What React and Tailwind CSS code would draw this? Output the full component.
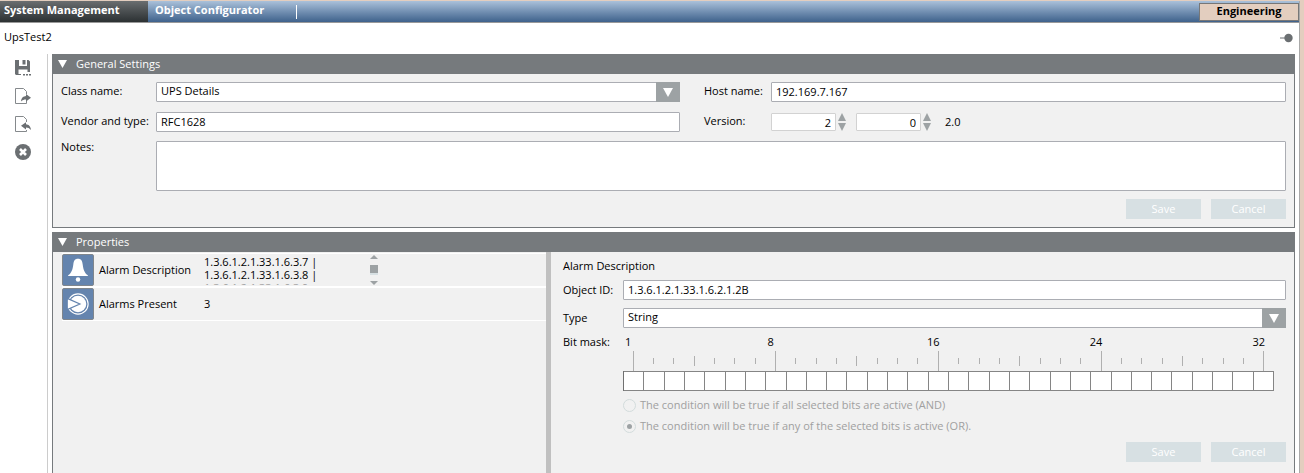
import React, { useState } from "react";

const TICKS = Array.from({ length: 32 }, (_, i) => i + 1);
const LABELLED = [1, 8, 16, 24, 32];

const fieldClass =
  "h-5 w-full min-w-0 rounded-[1px] border border-[#abadb3] bg-white pb-0.5 pl-1 text-[11px] leading-4 text-black outline-none";

const TriangleDown = ({ className }) => (
  <svg viewBox="0 0 10 9" preserveAspectRatio="none" className={className} fill="currentColor">
    <path d="M0 0h10L5 9z" />
  </svg>
);

const SaveIcon = () => (
  <svg viewBox="0 0 16 16" className="size-4">
    <path
      fill="#6b6f72"
      fillRule="evenodd"
      d="M0 0h4v6h8V0h1.500L15 1.500V12h-2.500V9.500h-9V15H1L0 14zM7.500 0h3v4.500h-3z"
    />
    <path fill="#6b6f72" d="M3 14h3v1H3zM8 14h2v1.500H8zM11 14h2v1.500h-2zM14 14h2v1.500h-2z" />
  </svg>
);

const ExportIcon = () => (
  <svg viewBox="0 0 16 16" className="size-4">
    <path fill="none" stroke="#85898c" d="M11.500 6V3.500L8.500.5h-8v15h11V13" />
    <path fill="#6b6f72" d="M6 13.500c.4-4 2.500-5.300 5-5.500V6L16 9.800l-5 3.700v-2c-2 0-3.500.5-5 2z" />
  </svg>
);

const ImportIcon = () => (
  <svg viewBox="0 0 16 16" className="size-4">
    <path fill="none" stroke="#85898c" d="M11.500 6V3.500L8.500.5h-8v15h11V14" />
    <path fill="#6b6f72" d="M16 14c-.4-4-2.500-5.500-5-5.700v-2L6 9.800l5 3.700v-2c2 0 3.500.8 5 2.500z" />
  </svg>
);

const DeleteIcon = () => (
  <svg viewBox="0 0 16 16" className="size-4">
    <circle cx="8" cy="8" r="8" fill="#6b6f72" />
    <path d="M5 5l6 6M11 5l-6 6" stroke="#fff" strokeWidth="2.600" />
  </svg>
);

const BellIcon = () => (
  <svg viewBox="0 0 32 32" className="size-full">
    <path fill="#fff" d="M16 4c3.500 0 4.500 2.300 5 6 .8 6 2 9 5.500 11.500v1h-21v-1C9 19 10.200 16 11 10c.5-3.700 1.500-6 5-6z" />
    <circle cx="16" cy="26" r="2.400" fill="#fff" />
  </svg>
);

const PresentIcon = () => (
  <svg viewBox="0 0 32 32" className="size-full">
    <circle cx="16" cy="16" r="10.800" fill="none" stroke="#fff" strokeWidth="1.200" />
    <circle cx="16" cy="16" r="8.800" fill="#fff" />
    <path fill="#fff" stroke="#6484ae" strokeWidth="1.300" d="M4.500 10L18 16 4.500 22z" />
  </svg>
);

const TOOLS = [
  { label: "Save", icon: SaveIcon },
  { label: "Export", icon: ExportIcon },
  { label: "Import", icon: ImportIcon },
  { label: "Delete", icon: DeleteIcon },
];

const Select = ({ id, options }) => (
  <div className="relative flex">
    <select id={id} className={`${fieldClass} appearance-none`}>
      {options.map((option) => (
        <option key={option}>{option}</option>
      ))}
    </select>
    <span className="pointer-events-none absolute inset-y-0 right-0 flex w-6 items-center justify-center bg-[#9da2a4] text-white">
      <TriangleDown className="h-[9px] w-2.5" />
    </span>
  </div>
);

const Spinner = ({ label, value, onChange }) => (
  <div className="flex items-center gap-0.5">
    <input
      aria-label={label}
      value={value}
      onChange={(e) => onChange(Number(e.target.value) || 0)}
      className="h-[18px] w-[65px] rounded-[1px] border border-[#d2d2d2] bg-white pr-1 text-right text-[11px] leading-4 outline-none"
    />
    <div className="flex flex-col gap-0.5 text-[#9da2a4]">
      <button type="button" aria-label={`Increase ${label}`} onClick={() => onChange(value + 1)}>
        <TriangleDown className="h-2 w-2 rotate-180" />
      </button>
      <button type="button" aria-label={`Decrease ${label}`} onClick={() => onChange(Math.max(0, value - 1))}>
        <TriangleDown className="h-2 w-2" />
      </button>
    </div>
  </div>
);

const FormButtons = () => (
  <div className="flex justify-end gap-2.5">
    {["Save", "Cancel"].map((label) => (
      <button
        key={label}
        type="button"
        disabled
        className="h-5 w-[75px] bg-[#d7e0e3] text-center leading-[18px] text-white"
      >
        {label}
      </button>
    ))}
  </div>
);

const Panel = ({ title, className, children }) => {
  const [open, setOpen] = useState(true);
  return (
    <section className={`flex flex-col border border-[#767a7d] bg-[#f1f1f1] ${className}`}>
      <h2 className="bg-[#767a7d] text-white">
        <button
          type="button"
          aria-expanded={open}
          onClick={() => setOpen(!open)}
          className="flex h-[19px] w-full items-center gap-[9px] pb-px pl-[5px] text-left"
        >
          <TriangleDown className="h-2 w-[9px]" />
          {title}
        </button>
      </h2>
      {open && children}
    </section>
  );
};

const GeneralSettings = () => {
  const [major, setMajor] = useState(2);
  const [minor, setMinor] = useState(0);

  return (
    <Panel title="General Settings" className="shrink-0">
      <div className="flex flex-col px-2 pt-2 pb-2">
        <div className="grid grid-cols-[95px_524fr_91px_515fr] gap-y-2.5">
          <label htmlFor="class-name" className="pt-px leading-4">Class name:</label>
          <Select id="class-name" options={["UPS Details"]} />
          <label htmlFor="host-name" className="pt-px pl-6 leading-4">Host name:</label>
          <input id="host-name" defaultValue="192.169.7.167" className={fieldClass} />

          <label htmlFor="vendor" className="pt-px leading-4">Vendor and type:</label>
          <input id="vendor" defaultValue="RFC1628" className={fieldClass} />
          <span className="pt-px pl-6 leading-4">Version:</span>
          <div className="flex items-center gap-2.5">
            <Spinner label="Major version" value={major} onChange={setMajor} />
            <Spinner label="Minor version" value={minor} onChange={setMinor} />
            <output className="pl-1">{`${major}.${minor}`}</output>
          </div>
        </div>
        <div className="mt-[9px] mb-2 grid grid-cols-[95px_1fr]">
          <label htmlFor="notes" className="leading-3">Notes:</label>
          <textarea
            id="notes"
            className="h-[50px] w-full resize-none rounded-[1px] border border-[#abadb3] bg-white px-1 outline-none"
          />
        </div>
        <FormButtons />
      </div>
    </Panel>
  );
};

const PropertyRow = ({ name, icon: Icon, children }) => (
  <li className="flex items-center border-b-2 border-white last:border-b">
    <button type="button" className="flex w-[142px] items-center gap-[5px] text-left">
      <span className="size-8 shrink-0 rounded-[2px] border border-[#80868c] bg-[#6484ae]">
        <Icon />
      </span>
      {name}
    </button>
    {children}
  </li>
);

const ValueScroller = ({ lines }) => (
  <div className="flex h-[30px] w-[174px] justify-between">
    <div className="h-[30px] overflow-hidden leading-[13px]">
      {lines.map((line) => (
        <p key={line} className="last:text-[#a0a0a0]">{line}</p>
      ))}
    </div>
    <div className="flex w-2 flex-col items-center justify-between text-[#9da2a4]">
      <TriangleDown className="h-1 w-2 rotate-180" />
      <span className="h-2.5 w-2 border-b-2 border-[#d7e0e3] bg-[#9da2a4]" />
      <TriangleDown className="h-1 w-2" />
    </div>
  </div>
);

const BitMask = () => (
  <div className="mr-3">
    <div className="grid grid-cols-32">
      {TICKS.map((bit) => (
        <div key={bit} className="flex flex-col items-center">
          <span className="-ml-2.5 h-[15px] leading-3 whitespace-nowrap">
            {LABELLED.includes(bit) ? bit : ""}
          </span>
          <span className="flex h-5 items-center">
            <i
              className={`w-px bg-[#b0b0b0] ${
                LABELLED.includes(bit) ? "h-5" : bit % 4 === 0 ? "h-2.5" : "h-1.5"
              }`}
            />
          </span>
        </div>
      ))}
    </div>
    <div className="grid h-5 grid-cols-32 border-l border-[#707070]">
      {TICKS.map((bit) => (
        <input
          key={bit}
          type="checkbox"
          disabled
          aria-label={`Bit ${bit}`}
          className="h-5 w-full appearance-none border-y border-r border-[#858585] bg-white"
        />
      ))}
    </div>
  </div>
);

const Condition = ({ checked, children }) => (
  <label className="flex h-[21px] items-center gap-1 text-[#a0a0a0]">
    <input
      type="radio"
      name="condition"
      disabled
      defaultChecked={checked}
      className="grid size-[13px] appearance-none place-items-center rounded-full border border-[#d3dcdc] bg-[#f1f1f1] before:size-[5px] before:rounded-full checked:before:bg-[#9da2a4]"
    />
    {children}
  </label>
);

const Properties = () => (
  <Panel title="Properties" className="mt-1 flex-1 border-b-0">
    <div className="flex flex-1">
      <div className="w-[493px] shrink-0 pt-px pl-[9px]">
        <ul className="border-t border-white">
          <PropertyRow name="Alarm Description" icon={BellIcon}>
            <ValueScroller
              lines={["1.3.6.1.2.1.33.1.6.3.7 |", "1.3.6.1.2.1.33.1.6.3.8 |", "1.3.6.1.2.1.33.1.6.3.9"]}
            />
          </PropertyRow>
          <PropertyRow name="Alarms Present" icon={PresentIcon}>
            <span>3</span>
          </PropertyRow>
        </ul>
      </div>
      <div className="w-[5px] shrink-0 bg-[#c0c0c0]" />
      <div className="flex min-w-0 flex-1 flex-col pr-2 pl-3">
        <h3 className="pt-1.5 leading-4">Alarm Description</h3>
        <div className="mt-1.5 grid grid-cols-[60px_1fr] gap-y-2">
          <label htmlFor="object-id" className="leading-5">Object ID:</label>
          <input id="object-id" defaultValue="1.3.6.1.2.1.33.1.6.2.1.2B" className={fieldClass} />
          <label htmlFor="type" className="leading-5">Type</label>
          <Select id="type" options={["String"]} />
          <span className="leading-3">Bit mask:</span>
          <div>
            <BitMask />
            <div className="mt-1">
              <Condition>The condition will be true if all selected bits are active (AND)</Condition>
              <Condition checked>The condition will be true if any of the selected bits is active (OR).</Condition>
            </div>
          </div>
        </div>
        <div className="pt-[5px] pb-[11px]">
          <FormButtons />
        </div>
      </div>
    </div>
  </Panel>
);

const App = () => (
  <div className="flex min-h-screen border-t border-[#e3cebf] bg-[#e3cebf] pr-1 font-['Open_Sans','Noto_Sans',sans-serif] text-[11px] text-black">
    <div className="flex min-w-0 flex-1 flex-col border-r border-[#a9a9a9] bg-white">
      <header className="flex h-[22px] justify-between border-b border-[#999] bg-linear-to-b from-[#aac1da] to-[#3f628c]">
        <nav className="flex items-center font-bold text-white">
          <a href="#system" className="flex h-full w-[148px] items-center bg-linear-to-b from-[#6a6e70] to-[#2c3133] pb-0.5 pl-1">
            System Management
          </a>
          <a href="#object" className="flex h-full items-center pb-0.5 pl-[7px]">
            Object Configurator
          </a>
          <span className="ml-8 h-3.5 w-px bg-white" />
        </nav>
        <button type="button" className="mt-0.5 flex h-[18px] w-[100px] items-center justify-center border border-[#777] bg-[#e3cebf] pb-0.5 font-bold leading-3">
          Engineering
        </button>
      </header>

      <div className="flex h-[31px] items-center justify-between pr-1.5 pb-0.5 pl-1">
        <h1>UpsTest2</h1>
        <button type="button" aria-label="Pin">
          <svg viewBox="0 0 13 10" className="h-2.5 w-[13px]">
            <path d="M0 5h6" stroke="#6b6f72" />
            <circle cx="8.500" cy="5" r="4.200" fill="#6b6f72" />
          </svg>
        </button>
      </div>

      <div className="flex flex-1">
        <aside className="flex w-12 shrink-0 flex-col items-center gap-3 border-r border-[#ccc] pt-1.5 pr-0.5">
          {TOOLS.map(({ label, icon: Icon }) => (
            <button key={label} type="button" aria-label={label}>
              <Icon />
            </button>
          ))}
        </aside>
        <main className="flex min-w-0 flex-1 flex-col pr-1 pl-1">
          <GeneralSettings />
          <Properties />
        </main>
      </div>
    </div>
  </div>
);

export default App;
